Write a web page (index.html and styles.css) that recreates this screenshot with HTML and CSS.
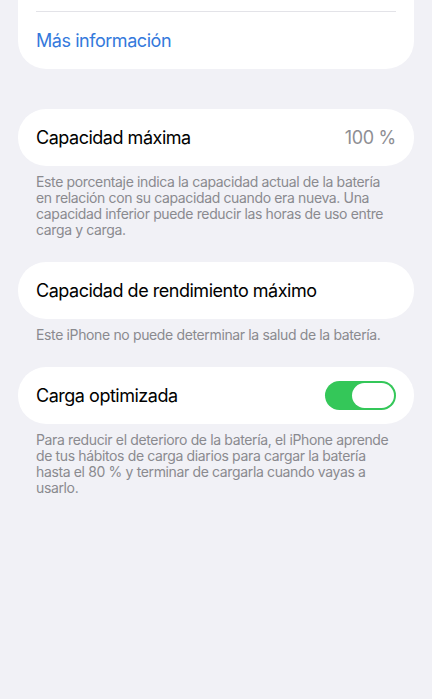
FILE: index.html
```html
<!DOCTYPE html>
<html lang="es">
<head>
<meta charset="utf-8">
<title>Salud de la batería</title>
<link rel="stylesheet" href="styles.css">
</head>
<body>
<main class="page">
  <section class="card card-top">
    <div class="sep"></div>
    <div class="row"><a class="link" href="#">Más información</a></div>
  </section>

  <section class="group">
    <div class="card">
      <div class="row">
        <span class="label">Capacidad máxima</span>
        <span class="value">100 %</span>
      </div>
    </div>
    <p class="footer">Este porcentaje indica la capacidad actual de la batería en relación con su capacidad cuando era nueva. Una capacidad inferior puede reducir las horas de uso entre carga y carga.</p>
  </section>

  <section class="group">
    <div class="card">
      <div class="row">
        <span class="label">Capacidad de rendimiento máximo</span>
      </div>
    </div>
    <p class="footer">Este iPhone no puede determinar la salud de la batería.</p>
  </section>

  <section class="group">
    <div class="card">
      <div class="row">
        <span class="label">Carga optimizada</span>
        <span class="toggle on"><span class="knob"></span></span>
      </div>
    </div>
    <p class="footer">Para reducir el deterioro de la batería, el iPhone aprende de tus hábitos de carga diarios para cargar la batería hasta el 80 % y terminar de cargarla cuando vayas a usarlo.</p>
  </section>
</main>
</body>
</html>
```

FILE: styles.css
```css
html, body {
  margin: 0;
  padding: 0;
  background: #f1f1f6;
}

body {
  font-family: Inter, "Noto Sans", "Liberation Sans", sans-serif;
  color: #000;
  -webkit-font-smoothing: antialiased;
}

.page {
  padding: 0 18px;
  display: flex;
  flex-direction: column;
}

.card {
  background: #fff;
  border-radius: 28px;
}

.card-top {
  border-radius: 0 0 28px 28px;
  padding-top: 11px;
  margin-bottom: 40px;
}

.sep {
  height: 1px;
  margin: 0 18px;
  background: #e3e3e8;
}

.row {
  height: 57px;
  padding: 0 18px;
  display: flex;
  align-items: center;
  justify-content: space-between;
}

.link {
  color: #3479dc;
  text-decoration: none;
  font-size: 18px;
  letter-spacing: -0.45px;
}

.label {
  font-size: 18px;
  letter-spacing: -0.48px;
}

.value {
  font-size: 18px;
  letter-spacing: -0.3px;
  color: #8e8e93;
}

.footer {
  margin: 8px 18px 24px;
  font-size: 14px;
  line-height: 16px;
  letter-spacing: -0.36px;
  color: #8a8a8f;
}

.toggle {
  width: 71px;
  height: 29px;
  border-radius: 15px;
  background: #34c759;
  display: flex;
  align-items: center;
  justify-content: flex-end;
  padding: 0 2px;
  box-sizing: border-box;
}

.knob {
  width: 42px;
  height: 25px;
  border-radius: 13px;
  background: #fff;
}
```
